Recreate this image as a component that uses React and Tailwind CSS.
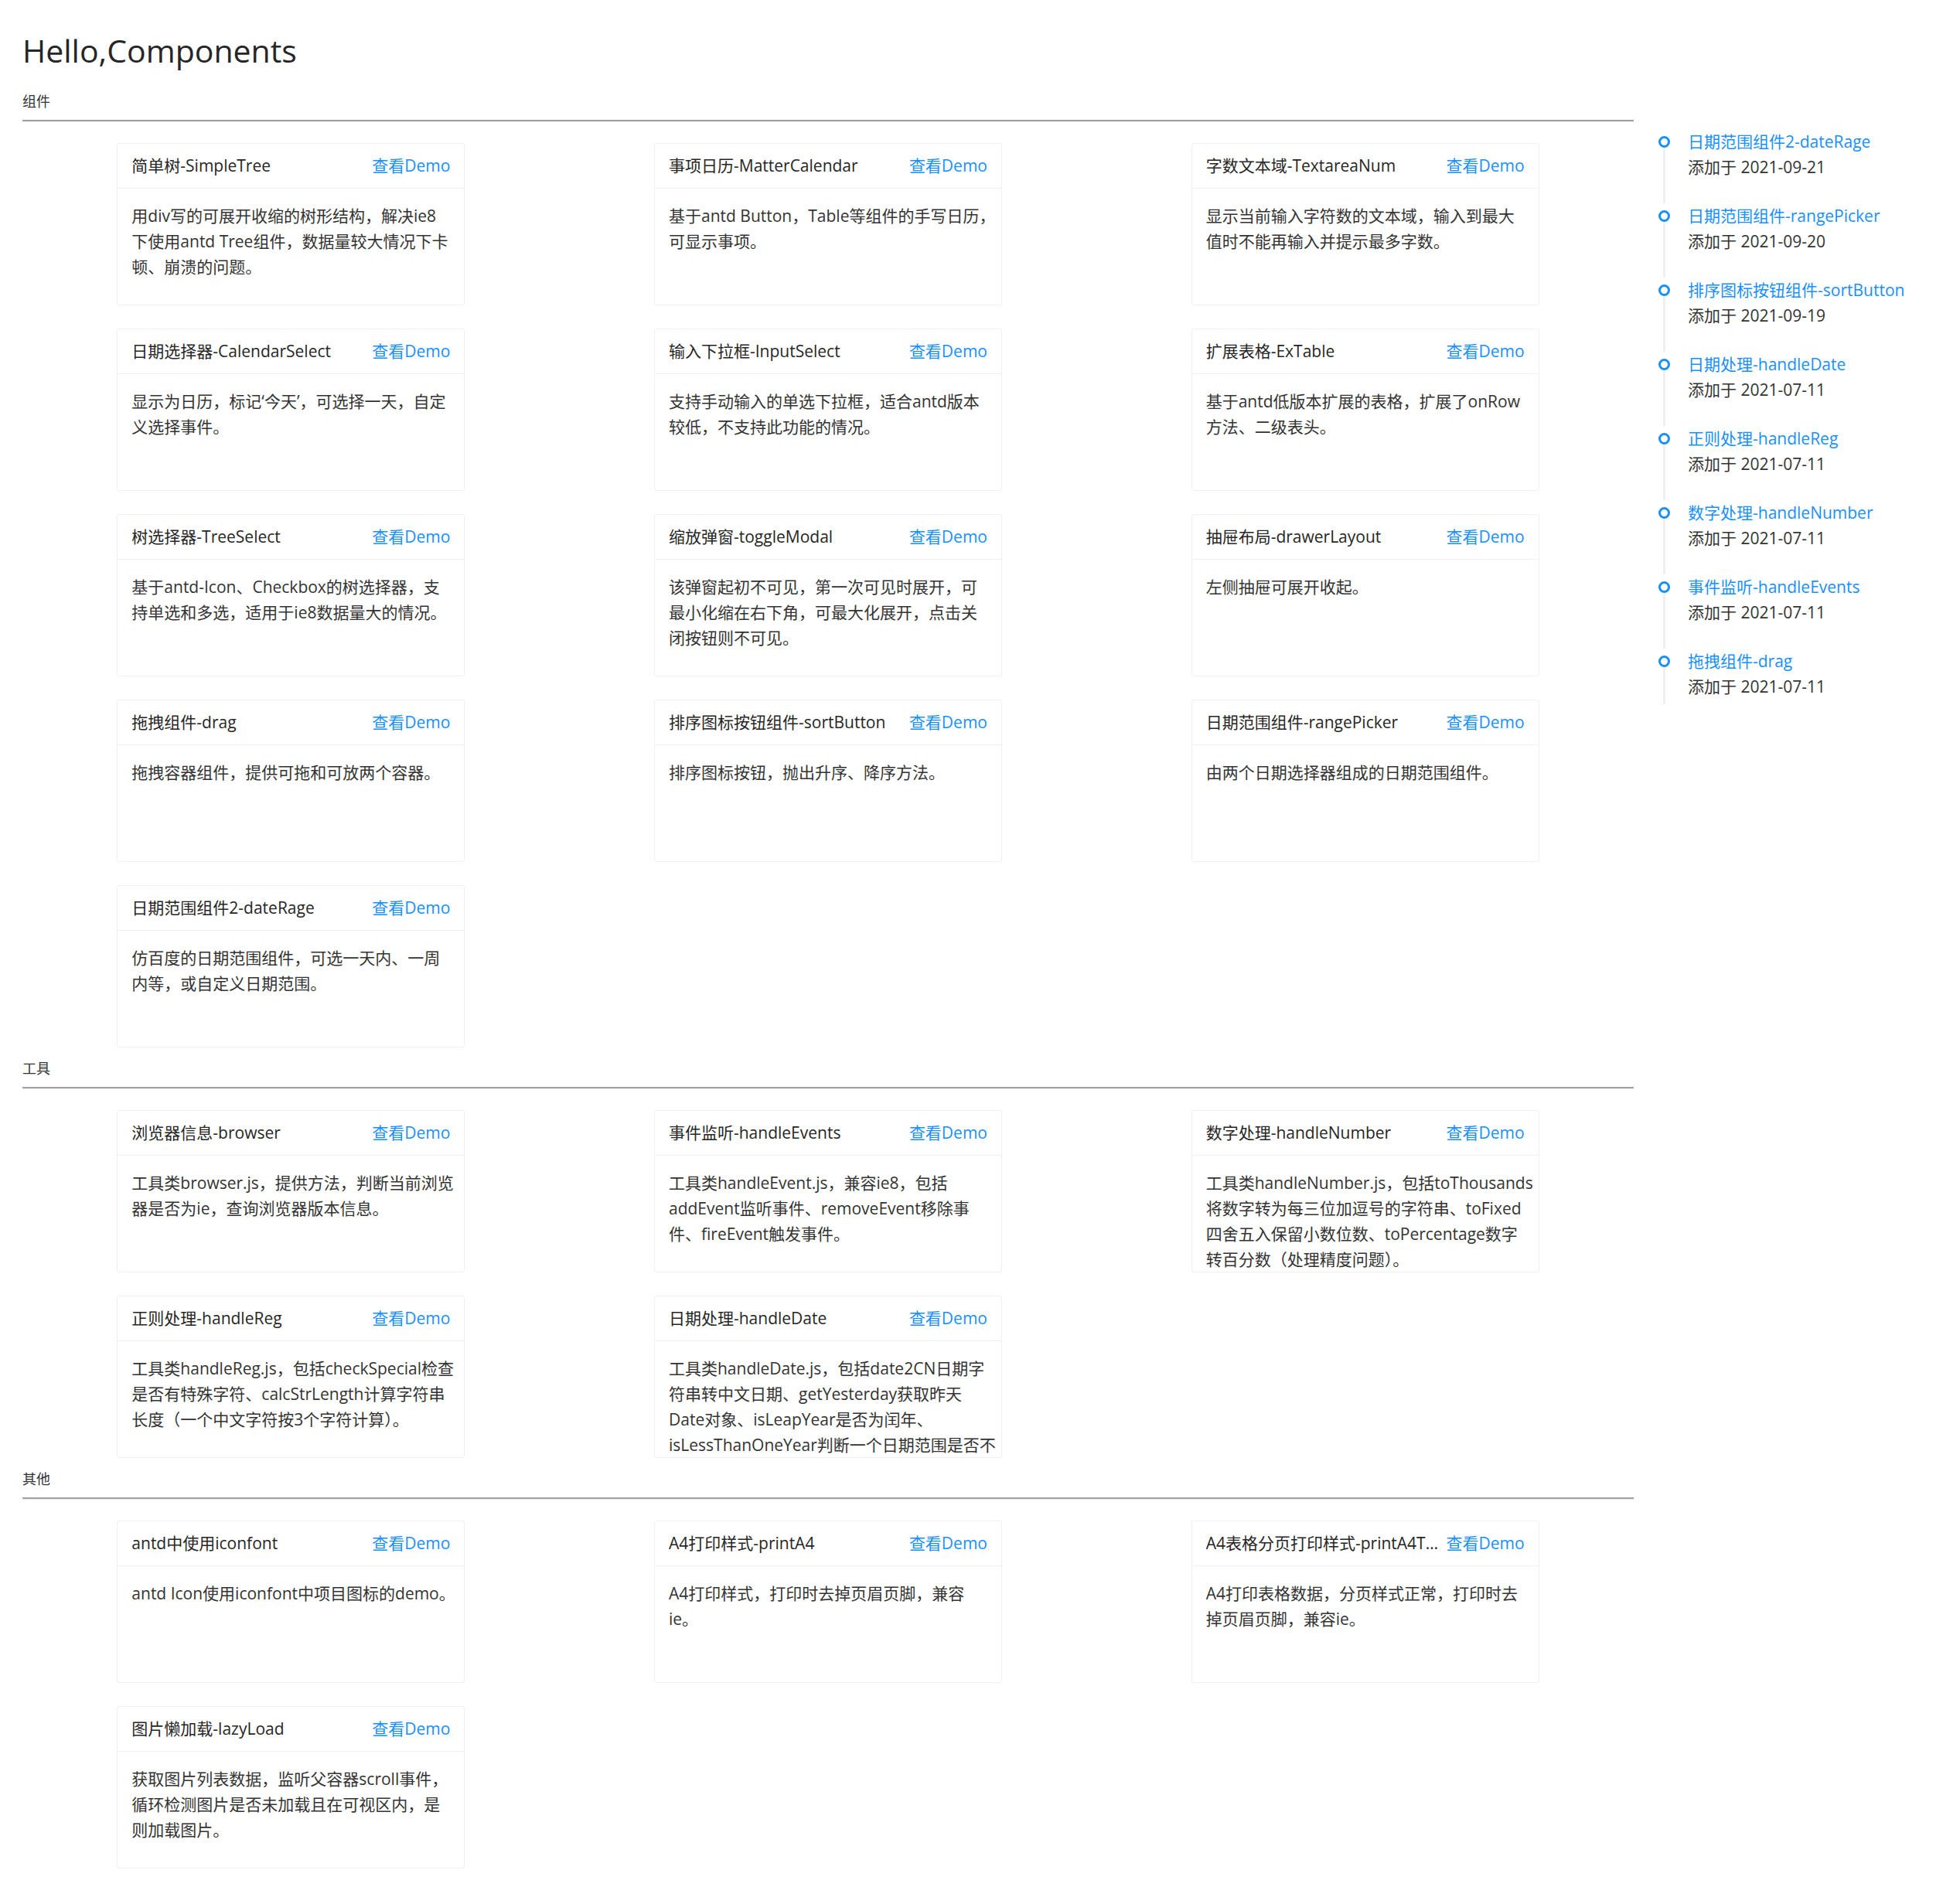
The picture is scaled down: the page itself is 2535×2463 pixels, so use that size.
import React from 'react';

const sections = [
  {
    name: '组件',
    cards: [
      {
        title: '简单树-SimpleTree',
        lines: ['用div写的可展开收缩的树形结构，解决ie8', '下使用antd Tree组件，数据量较大情况下卡', '顿、崩溃的问题。'],
      },
      {
        title: '事项日历-MatterCalendar',
        lines: ['基于antd Button，Table等组件的手写日历，', '可显示事项。'],
      },
      {
        title: '字数文本域-TextareaNum',
        lines: ['显示当前输入字符数的文本域，输入到最大', '值时不能再输入并提示最多字数。'],
      },
      {
        title: '日期选择器-CalendarSelect',
        lines: ['显示为日历，标记‘今天’，可选择一天，自定', '义选择事件。'],
      },
      {
        title: '输入下拉框-InputSelect',
        lines: ['支持手动输入的单选下拉框，适合antd版本', '较低，不支持此功能的情况。'],
      },
      {
        title: '扩展表格-ExTable',
        lines: ['基于antd低版本扩展的表格，扩展了onRow', '方法、二级表头。'],
      },
      {
        title: '树选择器-TreeSelect',
        lines: ['基于antd-Icon、Checkbox的树选择器，支', '持单选和多选，适用于ie8数据量大的情况。'],
      },
      {
        title: '缩放弹窗-toggleModal',
        lines: ['该弹窗起初不可见，第一次可见时展开，可', '最小化缩在右下角，可最大化展开，点击关', '闭按钮则不可见。'],
      },
      {
        title: '抽屉布局-drawerLayout',
        lines: ['左侧抽屉可展开收起。'],
      },
      {
        title: '拖拽组件-drag',
        lines: ['拖拽容器组件，提供可拖和可放两个容器。'],
      },
      {
        title: '排序图标按钮组件-sortButton',
        lines: ['排序图标按钮，抛出升序、降序方法。'],
      },
      {
        title: '日期范围组件-rangePicker',
        lines: ['由两个日期选择器组成的日期范围组件。'],
      },
      {
        title: '日期范围组件2-dateRage',
        lines: ['仿百度的日期范围组件，可选一天内、一周', '内等，或自定义日期范围。'],
      },
    ],
  },
  {
    name: '工具',
    cards: [
      {
        title: '浏览器信息-browser',
        lines: ['工具类browser.js，提供方法，判断当前浏览', '器是否为ie，查询浏览器版本信息。'],
      },
      {
        title: '事件监听-handleEvents',
        lines: ['工具类handleEvent.js，兼容ie8，包括', 'addEvent监听事件、removeEvent移除事', '件、fireEvent触发事件。'],
      },
      {
        title: '数字处理-handleNumber',
        lines: [
          '工具类handleNumber.js，包括toThousands',
          '将数字转为每三位加逗号的字符串、toFixed',
          '四舍五入保留小数位数、toPercentage数字',
          '转百分数（处理精度问题）。',
        ],
      },
      {
        title: '正则处理-handleReg',
        lines: ['工具类handleReg.js，包括checkSpecial检查', '是否有特殊字符、calcStrLength计算字符串', '长度（一个中文字符按3个字符计算）。'],
      },
      {
        title: '日期处理-handleDate',
        lines: [
          '工具类handleDate.js，包括date2CN日期字',
          '符串转中文日期、getYesterday获取昨天',
          'Date对象、isLeapYear是否为闰年、',
          'isLessThanOneYear判断一个日期范围是否不',
          '超过一年。',
        ],
      },
    ],
  },
  {
    name: '其他',
    cards: [
      {
        title: 'antd中使用iconfont',
        lines: ['antd Icon使用iconfont中项目图标的demo。'],
      },
      {
        title: 'A4打印样式-printA4',
        lines: ['A4打印样式，打印时去掉页眉页脚，兼容', 'ie。'],
      },
      {
        title: 'A4表格分页打印样式-printA4Table',
        lines: ['A4打印表格数据，分页样式正常，打印时去', '掉页眉页脚，兼容ie。'],
      },
      {
        title: '图片懒加载-lazyLoad',
        lines: ['获取图片列表数据，监听父容器scroll事件，', '循环检测图片是否未加载且在可视区内，是', '则加载图片。'],
      },
    ],
  },
];

const recent = [
  { title: '日期范围组件2-dateRage', date: '2021-09-21' },
  { title: '日期范围组件-rangePicker', date: '2021-09-20' },
  { title: '排序图标按钮组件-sortButton', date: '2021-09-19' },
  { title: '日期处理-handleDate', date: '2021-07-11' },
  { title: '正则处理-handleReg', date: '2021-07-11' },
  { title: '数字处理-handleNumber', date: '2021-07-11' },
  { title: '事件监听-handleEvents', date: '2021-07-11' },
  { title: '拖拽组件-drag', date: '2021-07-11' },
];

export default function App() {
  return (
    <div className="min-h-screen bg-white px-[29px] pb-[46px] font-['Open_Sans','Noto_Sans_CJK_SC',sans-serif]">
      <h1 className="pt-[37px] text-[41px] font-medium leading-[57px] text-[#262626]">Hello,Components</h1>

      <div className="mt-[23px] flex">
        {/* Left: card sections */}
        <div className="w-[2084px] shrink-0">
          {sections.map((section, i) => (
            <Section key={section.name} section={section} first={i === 0} />
          ))}
        </div>

        {/* Right: recently added timeline */}
        <div className="flex-1 pt-[50px]">
          {recent.map((item, i) => (
            <TimelineItem key={item.title} item={item} last={i === recent.length - 1} />
          ))}
        </div>
      </div>
    </div>
  );
}

function Section({ section, first }) {
  return (
    <section className={first ? '' : 'mt-[13px]'}>
      <div className="text-[18px] leading-[28px] text-[#333]">{section.name}</div>
      <div className="mt-[10px] h-[3px] border-t-2 border-b border-t-[#a0a0a0] border-b-[#eeeeee]" />
      <div className="grid grid-cols-3 gap-y-[30px] pt-[27px]">
        {section.cards.map((card) => (
          <Card key={card.title} card={card} />
        ))}
      </div>
    </section>
  );
}

function Card({ card }) {
  return (
    <div className="mx-auto h-[210px] w-[450px] overflow-hidden rounded-[3px] border border-[#f0f0f0] bg-white">
      <div className="flex h-[58px] items-center border-b border-[#f0f0f0] px-[18px]">
        <div className="min-w-0 flex-1 truncate text-[21px] text-[#262626]">{card.title}</div>
        <a className="ml-auto shrink-0 cursor-pointer text-[21px] text-[#1890ff]">查看Demo</a>
      </div>
      <div className="px-[18px] pt-[19px] text-[21px] leading-[33px] whitespace-nowrap text-[#333]">
        {card.lines.map((line) => (
          <div key={line}>{line}</div>
        ))}
      </div>
    </div>
  );
}

function TimelineItem({ item, last }) {
  return (
    <div className={`relative pl-[70px] ${last ? 'pb-[6px]' : 'pb-[30px]'}`}>
      <div className="absolute top-[10px] bottom-0 left-[38px] w-[3px] bg-[#f0f0f0]" />
      <div className="absolute top-[9px] left-[32px] h-[15px] w-[15px] rounded-full border-[3px] border-[#1890ff] bg-white" />
      <a className="block cursor-pointer text-[21px] leading-[33px] text-[#1890ff]">{item.title}</a>
      <div className="text-[21px] leading-[33px] text-[#333]">添加于 {item.date}</div>
    </div>
  );
}
